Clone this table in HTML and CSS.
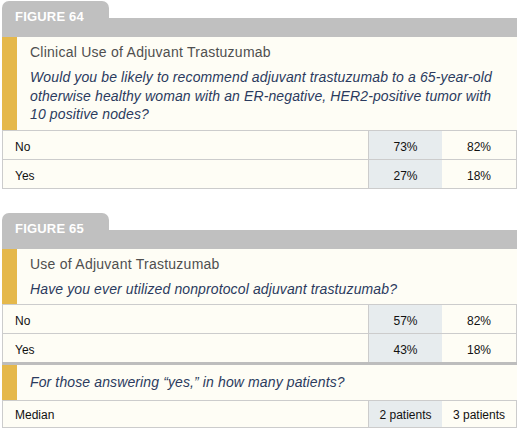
FILE: index.html
```html
<!DOCTYPE html>
<html>
<head>
<meta charset="utf-8">
<link rel="stylesheet" href="styles.css">
</head>
<body>
<div class="page">
  <section class="figure">
    <div class="head">
      <div class="tab">FIGURE 64</div>
      <div class="bar"></div>
    </div>
    <div class="q">
      <div class="stripe"></div>
      <div class="qtext">
        <div class="title">Clinical Use of Adjuvant Trastuzumab</div>
        <div class="question">Would you be likely to recommend adjuvant trastuzumab to a 65-year-old otherwise healthy woman with an ER-negative, HER2-positive tumor with 10 positive nodes?</div>
      </div>
    </div>
    <div class="row"><div class="label">No</div><div class="c1">73%</div><div class="c2">82%</div></div>
    <div class="row"><div class="label">Yes</div><div class="c1">27%</div><div class="c2">18%</div></div>
  </section>

  <section class="figure">
    <div class="head">
      <div class="tab">FIGURE 65</div>
      <div class="bar"></div>
    </div>
    <div class="q">
      <div class="stripe"></div>
      <div class="qtext">
        <div class="title">Use of Adjuvant Trastuzumab</div>
        <div class="question">Have you ever utilized nonprotocol adjuvant trastuzumab?</div>
      </div>
    </div>
    <div class="row"><div class="label">No</div><div class="c1">57%</div><div class="c2">82%</div></div>
    <div class="row last"><div class="label">Yes</div><div class="c1">43%</div><div class="c2">18%</div></div>
    <div class="q follow">
      <div class="stripe"></div>
      <div class="qtext">
        <div class="question">For those answering “yes,” in how many patients?</div>
      </div>
    </div>
    <div class="row short"><div class="label">Median</div><div class="c1">2 patients</div><div class="c2">3 patients</div></div>
  </section>
</div>
</body>
</html>
```

FILE: styles.css
```css
html, body {
  margin: 0;
  padding: 0;
  background: #ffffff;
}

.page {
  padding: 1px 3px 0 2px;
  display: flex;
  flex-direction: column;
  gap: 24px;
  font-family: "Liberation Sans", Arial, sans-serif;
}

.figure {
  display: flex;
  flex-direction: column;
}

.head {
  display: flex;
  height: 36px;
}

.tab {
  width: 94px;
  padding: 9px 0 0 13px;
  background: #c0c0c0;
  border-radius: 7px 7px 0 0;
  color: #ffffff;
  font-weight: bold;
  font-size: 13px;
  line-height: 14px;
  letter-spacing: 0.2px;
}

.bar {
  flex: 1;
  margin-top: 17px;
  background: #c0c0c0;
}

.q {
  display: flex;
  background: #fefdf5;
}

.stripe {
  width: 15px;
  background: #e5b84b;
  flex: none;
}

.qtext {
  flex: 1;
  padding: 7px 20px 6px 13px;
}

.title {
  font-size: 14px;
  line-height: 17px;
  color: #4f4f4f;
  letter-spacing: 0.25px;
  margin-bottom: 7px;
}

.question {
  font-size: 14px;
  line-height: 18.5px;
  font-style: italic;
  color: #2b3b5e;
  letter-spacing: 0.12px;
}

.follow {
  border-top: 3px solid #bdbdbd;
}

.follow .qtext {
  padding: 8px 10px 8px 13px;
}

.row {
  display: grid;
  grid-template-columns: 1fr 74px 74px;
  border: 1px solid #cccccc;
  border-bottom: none;
  background: #fefdf5;
  font-size: 12px;
  color: #111111;
}

.row:last-child {
  border-bottom: 1px solid #cccccc;
}

.row.last {
  border-bottom: none;
}

.row > div {
  padding: 4px 0 0;
  line-height: 24px;
}

.row.short > div {
  padding: 2px 0 0;
  line-height: 24px;
}

.label {
  padding-left: 12px !important;
}

.c1 {
  border-left: 1px solid #cccccc;
  background: #e7ecee;
  text-align: center;
}

.c2 {
  text-align: center;
}
```
